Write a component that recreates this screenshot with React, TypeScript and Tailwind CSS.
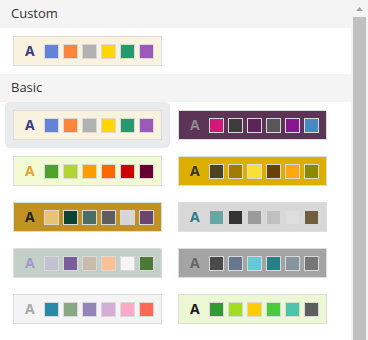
import React from "react";

type Palette = { bg: string; a: string; colors: string[] };

const custom: Palette = {
  bg: "#f9f2de",
  a: "#3a3a8a",
  colors: ["#6483d8", "#fe843a", "#b1b1b1", "#ffd700", "#259a6f", "#9b5ab9"],
};

const basic: Palette[] = [
  custom,
  { bg: "#5c3456", a: "#8a8a8a", colors: ["#d4177a", "#3c3c3c", "#5e2358", "#575757", "#8a1590", "#4688c0"] },
  { bg: "#f2fad4", a: "#e8a030", colors: ["#4ca22c", "#b1d430", "#ff9c00", "#ff6600", "#cc0000", "#660033"] },
  { bg: "#dcae00", a: "#333333", colors: ["#4a4420", "#a17a00", "#fae034", "#674300", "#ffa80f", "#8a8a00"] },
  { bg: "#c19124", a: "#222222", colors: ["#e6c471", "#0c4430", "#4a6f62", "#5e5e5e", "#d6d6d6", "#6a4570"] },
  { bg: "#d8d8d8", a: "#2a7a8a", colors: ["#65a8a6", "#333333", "#9b9b9b", "#c0c0c0", "#dedede", "#6e5e3e"] },
  { bg: "#c2d0c8", a: "#a098c8", colors: ["#c2c2d0", "#7a5e9c", "#c8bcad", "#ffc094", "#f5f5f5", "#4a7a36"] },
  { bg: "#a4a4a4", a: "#666666", colors: ["#4a4a4a", "#66788f", "#66c9d8", "#25808a", "#8695a0", "#777777"] },
  { bg: "#f4f4f4", a: "#aaaaaa", colors: ["#2a8aa5", "#88a884", "#9484b8", "#d4aed4", "#ffa8c8", "#ff6955"] },
  { bg: "#ecf7d4", a: "#1a1a1a", colors: ["#339933", "#a2dc24", "#ffcc00", "#4acc3a", "#4cc5a8", "#5e5e5e"] },
];

function Card({ p, selected }: { p: Palette; selected?: boolean }) {
  return (
    <div className={"w-[165px] h-[46px] p-[8px] rounded-[5px] " + (selected ? "bg-[#e8eaeb]" : "")}>
      <div
        className="w-[149px] h-[30px] border border-[#dddddd] flex items-center pl-[11px]"
        style={{ backgroundColor: p.bg }}
      >
        <span
          className="w-[19px] text-[14px] font-bold leading-none"
          style={{ color: p.a, fontFamily: '"Open Sans", sans-serif' }}
        >
          A
        </span>
        <div className="flex gap-[4px]">
          {p.colors.map((c, i) => (
            <div
              key={i}
              className="w-[15px] h-[15px] border border-[#d9d9d9]"
              style={{ backgroundColor: c }}
            />
          ))}
        </div>
      </div>
    </div>
  );
}

function Header({ label }: { label: string }) {
  return (
    <div
      className="h-[28px] bg-[#f4f4f4] pl-[11px] flex items-center text-[13px] text-[#333333]"
      style={{ fontFamily: '"Open Sans", sans-serif' }}
    >
      {label}
    </div>
  );
}

export default function App() {
  return (
    <div className="w-[368px] h-[340px] overflow-hidden flex bg-white">
      <div className="w-[351px] flex flex-col">
        <Header label="Custom" />
        <div className="pl-[5px]">
          <Card p={custom} />
        </div>
        <Header label="Basic" />
        <div className="pl-[5px] grid grid-cols-[165px_165px]">
          {basic.map((p, i) => (
            <Card key={i} p={p} selected={i === 0} />
          ))}
        </div>
      </div>
      <div className="w-[17px] h-[340px] bg-[#f4f4f4] flex flex-col items-center">
        <div className="h-[17px] w-[17px] flex items-center justify-center">
          <svg width="7" height="4" viewBox="0 0 7 4">
            <polygon points="3.5,0 7,4 0,4" fill="#a3a3a3" />
          </svg>
        </div>
        <div className="w-[13px] flex-1 bg-[#c1c1c1]" />
      </div>
    </div>
  );
}
